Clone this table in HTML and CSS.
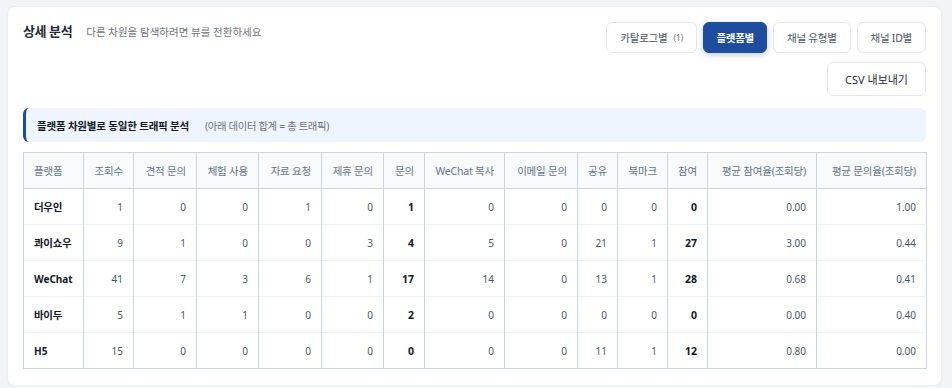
FILE: index.html
```html
<!DOCTYPE html>
<html lang="ko">
<head>
<meta charset="utf-8">
<title>상세 분석</title>
<link rel="stylesheet" href="styles.css">
</head>
<body>
<div class="card">
  <div class="head">
    <div class="head-left">
      <h2 class="title">상세 분석</h2>
      <span class="subtitle">다른 차원을 탐색하려면 뷰를 전환하세요</span>
    </div>
    <div class="head-right">
      <div class="tabs">
        <button class="btn">카탈로그별<span class="count">(1)</span></button>
        <button class="btn active">플랫폼별</button>
        <button class="btn">채널 유형별</button>
        <button class="btn">채널 ID별</button>
      </div>
      <button class="btn export">CSV 내보내기</button>
    </div>
  </div>

  <div class="banner">
    <span class="banner-title">플랫폼 차원별로 동일한 트래픽 분석</span>
    <span class="banner-sub">(아래 데이터 합계 = 총 트래픽)</span>
  </div>

  <table class="grid">
    <colgroup>
      <col class="w60"><col class="w50"><col class="w63"><col class="w62"><col class="w63"><col class="w62"><col class="w41"><col class="w80"><col class="w73"><col class="w40"><col class="w50"><col class="w40"><col class="w109"><col class="w110">
    </colgroup>
    <thead>
      <tr>
        <th class="left">플랫폼</th>
        <th>조회수</th>
        <th>견적 문의</th>
        <th>체험 사용</th>
        <th>자료 요청</th>
        <th>제휴 문의</th>
        <th>문의</th>
        <th>WeChat 복사</th>
        <th>이메일 문의</th>
        <th>공유</th>
        <th>북마크</th>
        <th>참여</th>
        <th>평균 참여율(조회당)</th>
        <th>평균 문의율(조회당)</th>
      </tr>
    </thead>
    <tbody>
      <tr>
        <td class="name">더우인</td>
        <td>1</td><td>0</td><td>0</td><td>1</td><td>0</td><td class="strong">1</td>
        <td>0</td><td>0</td><td>0</td><td>0</td><td class="strong">0</td>
        <td>0.00</td><td>1.00</td>
      </tr>
      <tr>
        <td class="name">콰이쇼우</td>
        <td>9</td><td>1</td><td>0</td><td>0</td><td>3</td><td class="strong">4</td>
        <td>5</td><td>0</td><td>21</td><td>1</td><td class="strong">27</td>
        <td>3.00</td><td>0.44</td>
      </tr>
      <tr>
        <td class="name lat">WeChat</td>
        <td>41</td><td>7</td><td>3</td><td>6</td><td>1</td><td class="strong">17</td>
        <td>14</td><td>0</td><td>13</td><td>1</td><td class="strong">28</td>
        <td>0.68</td><td>0.41</td>
      </tr>
      <tr>
        <td class="name">바이두</td>
        <td>5</td><td>1</td><td>1</td><td>0</td><td>0</td><td class="strong">2</td>
        <td>0</td><td>0</td><td>0</td><td>0</td><td class="strong">0</td>
        <td>0.00</td><td>0.40</td>
      </tr>
      <tr>
        <td class="name lat">H5</td>
        <td>15</td><td>0</td><td>0</td><td>0</td><td>0</td><td class="strong">0</td>
        <td>0</td><td>0</td><td>11</td><td>1</td><td class="strong">12</td>
        <td>0.80</td><td>0.00</td>
      </tr>
    </tbody>
  </table>
</div>
</body>
</html>
```

FILE: styles.css
```css
* { box-sizing: border-box; }

html, body {
  margin: 0;
  background: #f3f4f8;
}

body {
  padding: 6px 10px 0 7px;
  font-family: "Noto Sans", "Noto Sans CJK KR", sans-serif;
  color: #1f2937;
}

.card {
  background: #ffffff;
  border: 1px solid #eceef3;
  border-radius: 8px;
  box-shadow: 0 1px 3px rgba(15, 23, 42, 0.05);
  padding: 15px 15px 16px 15px;
}

.head {
  display: flex;
  justify-content: space-between;
  align-items: flex-start;
}

.head-left {
  display: flex;
  align-items: baseline;
  gap: 14px;
  height: 18px;
  line-height: 18px;
}

.title {
  margin: 0;
  font-size: 13px;
  font-weight: 700;
  letter-spacing: -0.4px;
  color: #1f2937;
}

.subtitle {
  font-size: 10.5px;
  letter-spacing: 0;
  color: #6b7280;
}

.head-right {
  display: flex;
  flex-direction: column;
  align-items: flex-end;
  gap: 9px;
}

.tabs {
  display: flex;
  gap: 6px;
}

.btn {
  font-family: inherit;
  height: 31px;
  padding: 0 13px;
  border: 1px solid #e2e5ea;
  border-radius: 6px;
  background: #ffffff;
  color: #4b5563;
  font-size: 10.5px;
  letter-spacing: -0.25px;
  display: flex;
  align-items: center;
  cursor: pointer;
}

.btn .count {
  font-size: 8.5px;
  letter-spacing: 0;
  color: #6b7280;
  margin-left: 6px;
}

.btn.active {
  padding: 0 12px;
  background: #1e4d9f;
  border-color: #1e4d9f;
  color: #ffffff;
  font-weight: 700;
  box-shadow: 0 2px 6px rgba(30, 77, 159, 0.28);
}

.btn.export {
  height: 34px;
  padding: 0 17px;
  font-size: 11px;
  letter-spacing: 0;
  color: #1f2937;
}

.banner {
  margin-top: 12px;
  height: 34px;
  display: flex;
  align-items: center;
  gap: 16px;
  padding: 0 11px;
  background: #eef5fe;
  border-left: 3px solid #1e4d9f;
  border-radius: 6px;
}

.banner-title {
  font-size: 10.5px;
  font-weight: 700;
  letter-spacing: -0.2px;
  color: #111827;
}

.banner-sub {
  font-size: 10.3px;
  letter-spacing: -0.3px;
  color: #6b7280;
}

.grid {
  margin-top: 10px;
  width: 903px;
  border-collapse: collapse;
  table-layout: fixed;
  border: 1px solid #cbd5e1;
}

.w60 { width: 60px; }
.w50 { width: 50px; }
.w63 { width: 63px; }
.w62 { width: 62px; }
.w41 { width: 41px; }
.w80 { width: 80px; }
.w73 { width: 73px; }
.w40 { width: 40px; }
.w109 { width: 109px; }
.w110 { width: 110px; }

.grid th {
  height: 36px;
  padding: 0 10px;
  background: #f8fafc;
  color: #64748b;
  font-size: 10.5px;
  font-weight: 400;
  letter-spacing: -0.2px;
  text-align: right;
  white-space: nowrap;
  border-left: 1px solid #cbd5e1;
  border-bottom: 1px solid #cbd5e1;
}

.grid th.left { text-align: left; }

.grid td {
  height: 36px;
  padding: 0 10px;
  font-size: 10px;
  color: #475569;
  text-align: right;
  white-space: nowrap;
  border-left: 1px solid #cbd5e1;
  border-top: 1px solid #edf0f4;
}

.grid td.name {
  text-align: left;
  font-size: 10.5px;
  font-weight: 700;
  letter-spacing: -0.3px;
  color: #111827;
}

.grid td.name.lat {
  font-size: 10px;
  letter-spacing: 0;
}

.grid td.strong {
  font-weight: 700;
  color: #0f172a;
  font-size: 10.5px;
}
```
